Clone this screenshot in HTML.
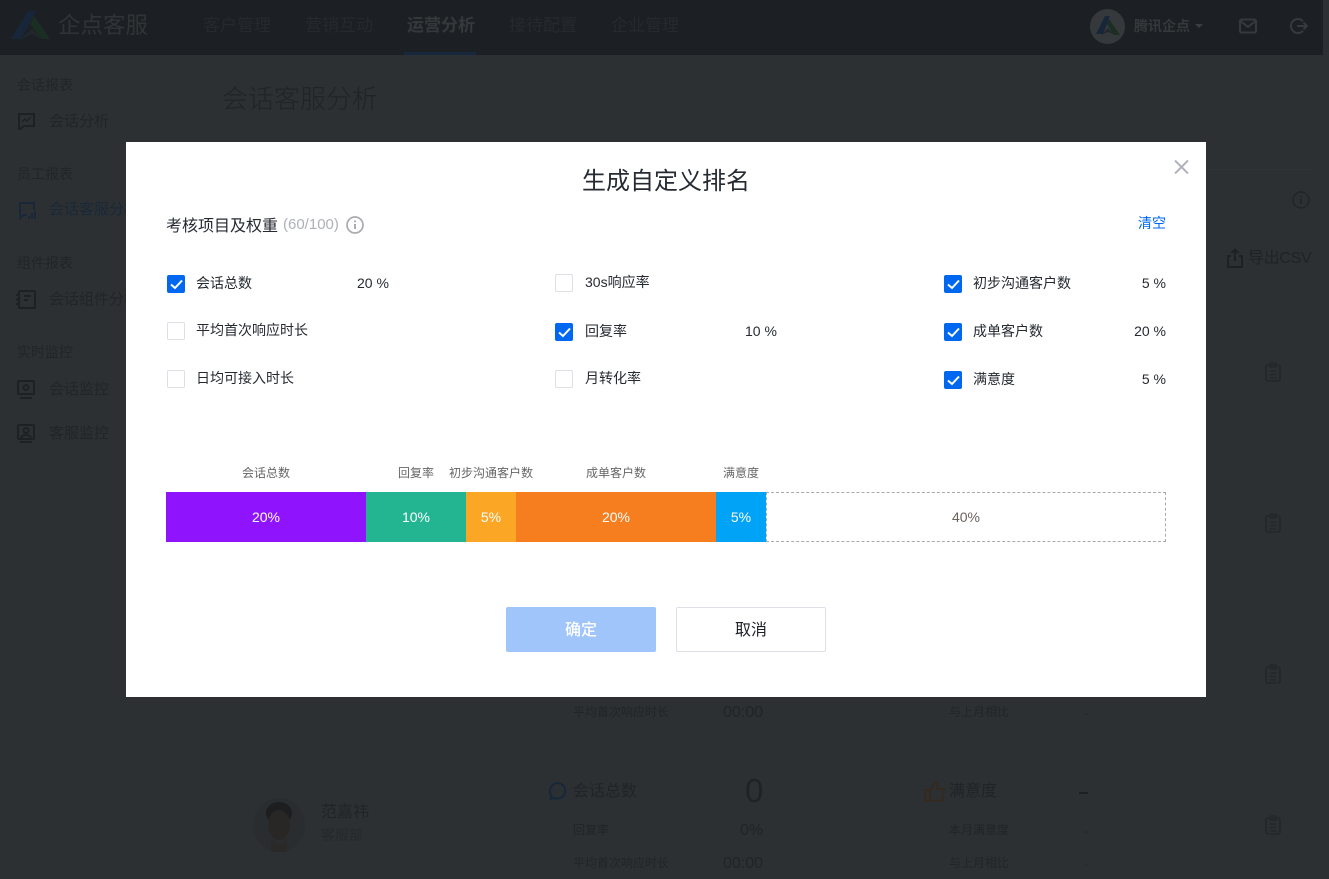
<!DOCTYPE html>
<html lang="zh-CN"><head><meta charset="utf-8"><title>生成自定义排名</title>
<style>
html,body{margin:0;padding:0;width:1329px;height:879px;overflow:hidden;background:#2c3033}
body{position:relative;font-family:"Liberation Sans","Noto Sans CJK SC",sans-serif}
.t{position:absolute;white-space:nowrap}
.s{position:absolute;display:block}
.d{color:#212528;font-size:15px;line-height:20px}
.hd{color:#26292d;font-size:17px;line-height:24px}
.sm{color:#212528;font-size:12px;line-height:16px}
#hdr{position:absolute;left:0;top:0;width:1323px;height:55px;background:#1c2024}
#modal{position:absolute;left:126px;top:142px;width:1080px;height:555px;background:#fff}
#modal .t{color:#262a30}
.c{position:absolute;left:0;width:18px;height:18px;box-sizing:border-box;border:1px solid #dcdfe6;border-radius:2px;background:#fff}
.c.on{background:#0068f0;border-color:#0068f0}
.c svg{position:absolute;left:2px;top:3px}
.l{font-size:14px;line-height:18px}
.seg{position:absolute;top:350px;height:50px;color:#fff;text-align:center;font-size:14px;line-height:50px}
.lab{position:absolute;top:323px;text-align:center;font-size:12px;line-height:16px;color:#666!important;white-space:nowrap}
</style></head><body>
<div id="hdr"></div>
<svg class="s" style="left:10px;top:10px" width="44" height="31" viewBox="0 0 44 31"><path d="M1 29 L18 1 H26 L11 29Z" fill="#18263a"/><path d="M24 6 L40 29 H32 L20 14Z" fill="#1b2e23"/><path d="M11 29 L22 19 L32 29 L22 24Z" fill="#20282c"/></svg>
<div class="t" style="left:58px;top:10px;font-size:22.5px;line-height:32px;color:#303437">企点客服</div>
<div class="t hd" style="left:203px;top:14px">客户管理</div>
<div class="t hd" style="left:305px;top:14px">营销互动</div>
<div class="t hd" style="left:407px;top:14px;color:#35393c;font-weight:bold">运营分析</div>
<div class="t hd" style="left:509px;top:14px">接待配置</div>
<div class="t hd" style="left:611px;top:14px">企业管理</div>
<div class="s" style="left:404px;top:52px;width:72px;height:3px;background:#17273c"></div>
<svg class="s" style="left:1090px;top:9px" width="35" height="35" viewBox="0 0 35 35"><circle cx="17.5" cy="17.5" r="17.5" fill="#35393c"/><path d="M6 25 L15 7 H20 L13 25Z" fill="#18263a"/><path d="M19 10 L30 26 H24 L17 15Z" fill="#1b2e23"/><path d="M11 26 L18 19 L25 26 L18 23Z" fill="#25292c"/></svg>
<div class="t" style="left:1134px;top:17px;font-size:14px;line-height:18px;color:#35393c;font-weight:bold">腾讯企点</div>
<div class="s" style="left:1195px;top:24px;width:0;height:0;border-left:4px solid transparent;border-right:4px solid transparent;border-top:4px solid #3a3e41"></div>
<svg class="s" style="left:1239px;top:18px" width="18" height="16" viewBox="0 0 18 16" fill="none" stroke="#363a3d" stroke-width="2"><rect x="1" y="1.5" width="16" height="13" rx="1.5"/><path d="M1.5 3 L9 9 L16.5 3"/></svg>
<svg class="s" style="left:1290px;top:17px" width="18" height="18" viewBox="0 0 18 18" fill="none" stroke="#363a3d" stroke-width="2"><path d="M13 4.2 A7 7 0 1 0 13 13.8"/><path d="M7 9 H16.5 M13.5 5.5 L17 9 L13.5 12.5"/></svg>

<div class="t sm" style="left:17px;top:77px;font-size:14px;color:#212528">会话报表</div>
<svg class="s" style="left:17px;top:112px" width="19" height="19" viewBox="0 0 19 19" fill="none" stroke="#1d2125" stroke-width="2"><path d="M2 2 H17 V14 H7 L3 17 H2Z"/><path d="M5 10 L8 7 L10 9 L14 5" stroke-width="1.5"/></svg>
<div class="t d" style="left:49px;top:112px">会话分析</div>
<div class="t sm" style="left:17px;top:166px;font-size:14px;color:#212528">员工报表</div>
<svg class="s" style="left:17px;top:201px" width="19" height="19" viewBox="0 0 19 19" fill="none" stroke="#18273a" stroke-width="2"><path d="M10 14 H7 L3 17 V2 H17 V9"/><path d="M12 18 V15 M15 18 V12 M18 18 V10" stroke-width="2"/><path d="M6 8 H6.1 M9.5 8 H9.6 M13 8 H13.1" stroke-width="2"/></svg>
<div class="t d" style="left:49px;top:200px;color:#1a2838">会话客服分析</div>
<div class="t sm" style="left:17px;top:255px;font-size:14px;color:#212528">组件报表</div>
<svg class="s" style="left:16px;top:290px" width="20" height="19" viewBox="0 0 20 19" fill="none" stroke="#1d2125" stroke-width="2"><rect x="3" y="1" width="16" height="17" rx="1"/><path d="M0 5 H4 M0 9.5 H4 M0 14 H4 M8 6 H15 M8 10 H12"/></svg>
<div class="t d" style="left:49px;top:290px">会话组件分析</div>
<div class="t sm" style="left:17px;top:344px;font-size:14px;color:#212528">实时监控</div>
<svg class="s" style="left:17px;top:380px" width="19" height="19" viewBox="0 0 19 19" fill="none" stroke="#1d2125" stroke-width="2"><rect x="1" y="1" width="16" height="13" rx="1"/><circle cx="9" cy="7.5" r="2.5"/><path d="M3 18 H15"/></svg>
<div class="t d" style="left:49px;top:380px">会话监控</div>
<svg class="s" style="left:17px;top:424px" width="19" height="19" viewBox="0 0 19 19" fill="none" stroke="#1d2125" stroke-width="2"><rect x="1" y="1" width="16" height="14" rx="1"/><circle cx="9" cy="6.5" r="2.5"/><path d="M4 14 C5 10 13 10 14 14 M3 18 H15"/></svg>
<div class="t d" style="left:49px;top:424px">客服监控</div>

<div class="t" style="left:222px;top:82px;font-size:26px;line-height:34px;color:#202427;font-weight:300">会话客服分析</div>
<div class="s" style="left:1206px;top:169px;width:105px;height:1px;background:#303437"></div>
<svg class="s" style="left:1292px;top:191px" width="18" height="18" viewBox="0 0 18 18" fill="none" stroke="#212528" stroke-width="1.5"><circle cx="9" cy="9" r="8"/><path d="M9 8 V13 M9 5 V6.5" stroke-width="2"/></svg>
<svg class="s" style="left:1226px;top:248px" width="18" height="20" viewBox="0 0 18 20" fill="none" stroke="#1d2125" stroke-width="2"><path d="M5 8 H2 V19 H16 V8 H13"/><path d="M9 13 V2 M5.5 5 L9 1.5 L12.5 5"/></svg>
<div class="t" style="left:1248px;top:248px;font-size:16px;line-height:22px;color:#1f2326;letter-spacing:-.3px">导出CSV</div>

<svg class="s" style="left:1264px;top:362px" width="18" height="20" viewBox="0 0 18 20" fill="none" stroke="#24282b" stroke-width="1.8"><rect x="2" y="3" width="14" height="16" rx="2"/><rect x="6" y="1" width="6" height="4" rx="1"/><path d="M5.5 9 H12.5 M5.5 12.5 H12.5 M5.5 16 H12.5" stroke-width="1.5"/></svg>
<svg class="s" style="left:1264px;top:513px" width="18" height="20" viewBox="0 0 18 20" fill="none" stroke="#24282b" stroke-width="1.8"><rect x="2" y="3" width="14" height="16" rx="2"/><rect x="6" y="1" width="6" height="4" rx="1"/><path d="M5.5 9 H12.5 M5.5 12.5 H12.5 M5.5 16 H12.5" stroke-width="1.5"/></svg>
<svg class="s" style="left:1264px;top:664px" width="18" height="20" viewBox="0 0 18 20" fill="none" stroke="#24282b" stroke-width="1.8"><rect x="2" y="3" width="14" height="16" rx="2"/><rect x="6" y="1" width="6" height="4" rx="1"/><path d="M5.5 9 H12.5 M5.5 12.5 H12.5 M5.5 16 H12.5" stroke-width="1.5"/></svg>
<svg class="s" style="left:1264px;top:815px" width="18" height="20" viewBox="0 0 18 20" fill="none" stroke="#24282b" stroke-width="1.8"><rect x="2" y="3" width="14" height="16" rx="2"/><rect x="6" y="1" width="6" height="4" rx="1"/><path d="M5.5 9 H12.5 M5.5 12.5 H12.5 M5.5 16 H12.5" stroke-width="1.5"/></svg>

<div class="t sm" style="left:573px;top:704px">平均首次响应时长</div>
<div class="t" style="left:723px;top:703px;font-size:16px;line-height:20px;color:#202427">00:00</div>
<div class="t sm" style="left:949px;top:704px">与上月相比</div>
<div class="t sm" style="left:1084px;top:705px">-</div>

<svg class="s" style="left:248px;top:798px" width="60" height="56" viewBox="0 0 60 56"><ellipse cx="31" cy="27" rx="26" ry="27" fill="#2a2d30"/><ellipse cx="31" cy="15" rx="13" ry="11" fill="#1c1e20"/><ellipse cx="31" cy="27" rx="11" ry="15" fill="#282726"/><path d="M23 40 C26 48 36 48 39 40 L39 54 L23 54Z" fill="#2a2928"/></svg>
<div class="t" style="left:321px;top:803px;font-size:16px;line-height:20px;color:#202427">范嘉祎</div>
<div class="t sm" style="left:321px;top:827px;font-size:14px;color:#25292c">客服部</div>
<svg class="s" style="left:549px;top:782px" width="18" height="18" viewBox="0 0 18 18" fill="none" stroke="#17273a" stroke-width="2"><path d="M9 1 A7.8 7.8 0 1 1 5 15.8 L1.5 17 L2.6 13.5 A7.8 7.8 0 0 1 9 1Z"/><path d="M5.5 9 H6 M8.8 9 H9.3 M12 9 H12.5" stroke-width="1.5"/></svg>
<div class="t" style="left:573px;top:781px;font-size:16px;line-height:22px;color:#202427">会话总数</div>
<div class="t" style="left:745px;top:770px;font-size:33px;line-height:42px;color:#1f2326">0</div>
<div class="t sm" style="left:573px;top:822px">回复率</div>
<div class="t" style="left:740px;top:821px;font-size:16px;line-height:20px;color:#202427">0%</div>
<div class="t sm" style="left:573px;top:855px">平均首次响应时长</div>
<div class="t" style="left:723px;top:854px;font-size:16px;line-height:20px;color:#202427">00:00</div>
<svg class="s" style="left:924px;top:781px" width="22" height="21" viewBox="0 0 22 21" fill="none" stroke="#33291f" stroke-width="2"><rect x="1" y="9" width="5" height="11"/><path d="M6 10 L11 1.5 C14 2 14 5 13 8 H20 L18 19.5 H6"/></svg>
<div class="t" style="left:949px;top:781px;font-size:16px;line-height:22px;color:#202427">满意度</div>
<div class="s" style="left:1079px;top:792px;width:9px;height:2px;background:#1c2023"></div>
<div class="t sm" style="left:949px;top:822px">本月满意度</div>
<div class="t sm" style="left:1084px;top:823px">-</div>
<div class="t sm" style="left:949px;top:855px">与上月相比</div>
<div class="t sm" style="left:1084px;top:856px">-</div>

<div id="modal">
 <div class="t" style="left:0;width:1080px;text-align:center;top:23px;font-size:24px;line-height:34px;color:#262a33">生成自定义排名</div>
 <svg class="s" style="left:1048px;top:18px" width="15" height="14" viewBox="0 0 15 14" stroke="#b0b3bb" stroke-width="2" fill="none"><path d="M1 0.5 L14 13.5 M14 0.5 L1 13.5"/></svg>
 <div class="t" style="left:40px;top:74px;font-size:16px;line-height:22px">考核项目及权重</div>
 <div class="t" style="left:157px;top:73px;font-size:15px;line-height:20px;color:#aeb1b7!important">(60/100)</div>
 <svg class="s" style="left:220px;top:74px" width="18" height="18" viewBox="0 0 18 18" fill="none" stroke="#a9abb0" stroke-width="1.7"><circle cx="9" cy="9" r="8"/><path d="M9 8 V13 M9 4.5 V6.3" stroke-width="2"/></svg>
 <div class="t" style="left:1012px;top:72px;font-size:14px;line-height:18px;color:#0068f0!important">清空</div>

 <div class="c on" style="left:41px;top:133px"><svg width="13" height="11" viewBox="0 0 13 11" fill="none" stroke="#fff" stroke-width="2"><path d="M1 5.5 L5 9 L12 1.5"/></svg></div>
 <div class="t l" style="left:70px;top:132px">会话总数</div>
 <div class="t" style="left:231px;top:131px;font-size:14px;line-height:20px">20 %</div>
 <div class="c" style="left:41px;top:180px"></div>
 <div class="t l" style="left:70px;top:179px">平均首次响应时长</div>
 <div class="c" style="left:41px;top:228px"></div>
 <div class="t l" style="left:70px;top:227px">日均可接入时长</div>

 <div class="c" style="left:429px;top:132px"></div>
 <div class="t l" style="left:459px;top:131px">30s响应率</div>
 <div class="c on" style="left:429px;top:181px"><svg width="13" height="11" viewBox="0 0 13 11" fill="none" stroke="#fff" stroke-width="2"><path d="M1 5.5 L5 9 L12 1.5"/></svg></div>
 <div class="t l" style="left:459px;top:180px">回复率</div>
 <div class="t" style="left:619px;top:179px;font-size:14px;line-height:20px">10 %</div>
 <div class="c" style="left:429px;top:228px"></div>
 <div class="t l" style="left:459px;top:227px">月转化率</div>

 <div class="c on" style="left:818px;top:133px"><svg width="13" height="11" viewBox="0 0 13 11" fill="none" stroke="#fff" stroke-width="2"><path d="M1 5.5 L5 9 L12 1.5"/></svg></div>
 <div class="t l" style="left:847px;top:132px">初步沟通客户数</div>
 <div class="t" style="right:40px;top:131px;font-size:14px;line-height:20px">5 %</div>
 <div class="c on" style="left:818px;top:181px"><svg width="13" height="11" viewBox="0 0 13 11" fill="none" stroke="#fff" stroke-width="2"><path d="M1 5.5 L5 9 L12 1.5"/></svg></div>
 <div class="t l" style="left:847px;top:180px">成单客户数</div>
 <div class="t" style="right:40px;top:179px;font-size:14px;line-height:20px">20 %</div>
 <div class="c on" style="left:818px;top:229px"><svg width="13" height="11" viewBox="0 0 13 11" fill="none" stroke="#fff" stroke-width="2"><path d="M1 5.5 L5 9 L12 1.5"/></svg></div>
 <div class="t l" style="left:847px;top:228px">满意度</div>
 <div class="t" style="right:40px;top:227px;font-size:14px;line-height:20px">5 %</div>

 <div class="lab t" style="left:40px;width:200px">会话总数</div>
 <div class="lab t" style="left:240px;width:100px">回复率</div>
 <div class="lab t" style="left:290px;width:150px">初步沟通客户数</div>
 <div class="lab t" style="left:390px;width:200px">成单客户数</div>
 <div class="lab t" style="left:590px;width:50px">满意度</div>

 <div class="seg" style="left:40px;width:200px;background:#9013fe">20%</div>
 <div class="seg" style="left:240px;width:100px;background:#23b592">10%</div>
 <div class="seg" style="left:340px;width:50px;background:#fca625">5%</div>
 <div class="seg" style="left:390px;width:200px;background:#f77e1e">20%</div>
 <div class="seg" style="left:590px;width:50px;background:#00a3f5">5%</div>
 <div class="seg" style="left:640px;width:400px;height:50px;box-sizing:border-box;border:1px dashed #aaa;color:#6b625c;line-height:48px;background:#fff">40%</div>

 <div class="s" style="left:380px;top:465px;width:150px;height:45px;background:#9fc5fa;border-radius:2px;color:#fff;text-align:center;font-size:16px;line-height:48px;font-weight:500">确定</div>
 <div class="s" style="left:550px;top:465px;width:150px;height:45px;box-sizing:border-box;border:1px solid #dcdfe6;border-radius:2px;color:#1c1f24;text-align:center;font-size:16px;line-height:46px">取消</div>
</div>
</body></html>
